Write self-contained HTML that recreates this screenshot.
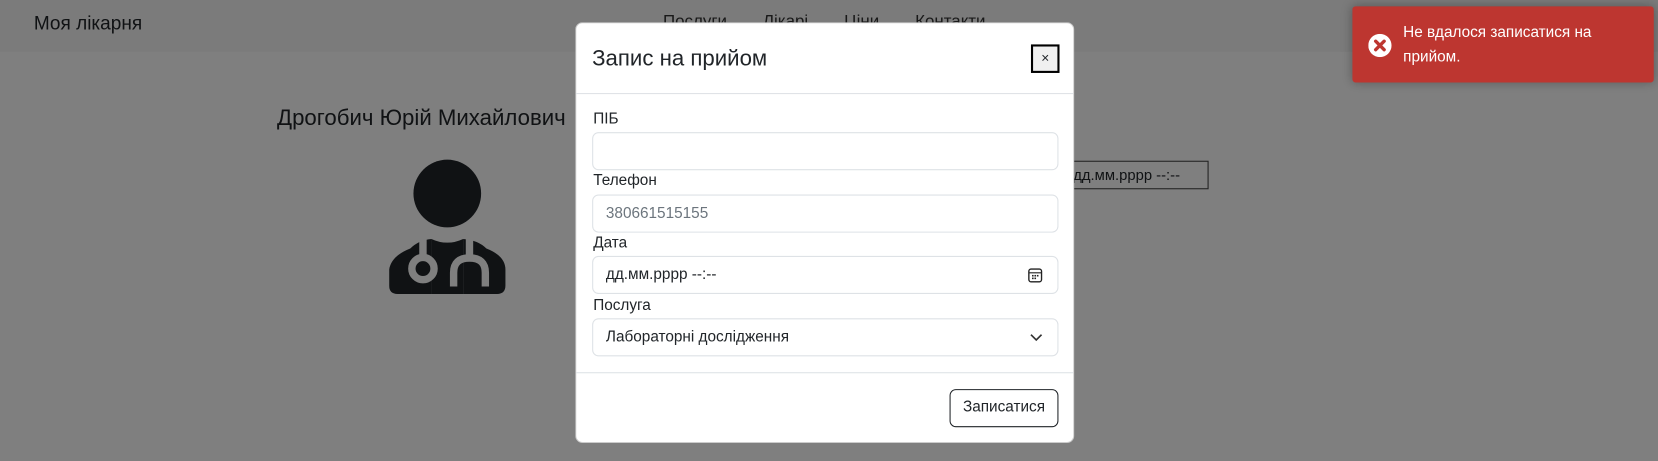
<!DOCTYPE html>
<html><head><meta charset="utf-8"><style>
*{box-sizing:border-box;margin:0;padding:0}
html,body{width:1658px;height:461px;overflow:hidden}
body{background:#fff;font-family:"Segoe UI","Liberation Sans","Noto Sans CJK SC",sans-serif;color:#212529;position:relative}
#w{position:absolute;left:0;top:0;width:1568px;height:436px;transform:scale(1.0574);transform-origin:0 0}
.nav{position:absolute;left:0;top:0;width:1568px;height:49px;background:#f6f6f6}
.brand{position:absolute;left:32px;top:12px;font-size:18px}
.links{position:absolute;top:12px;left:627px;font-size:16px;color:#333}
.links span{margin-right:34px}
.name{position:absolute;left:262px;top:100px;font-size:21px}
.bgdate{position:absolute;left:1000px;top:152px;width:143px;height:27px;border:1px solid #444;font-size:14px;padding:4px 0 0 14px}
.ov{position:absolute;left:0;top:0;width:1568px;height:436px;background:rgba(0,0,0,.5)}
.modal{position:absolute;left:544px;top:21px;width:472px;height:398px;background:#fff;border-radius:7px;border:1px solid rgba(0,0,0,.2)}
.hd{height:67px;border-bottom:1px solid #dee2e6;position:relative}
.hd h5{position:absolute;left:15px;top:22px;font-size:21px;font-weight:500}
.x{position:absolute;left:430px;top:20px;width:27px;height:27px;border:2px solid #000;font-size:13px;text-align:center;line-height:22px;background:#f0f0f0}
label{position:absolute;left:16px;font-size:14.5px}
.in{position:absolute;left:15px;width:441px;height:36px;border:1px solid #dee2e6;border-radius:6px;font-size:14.5px;padding:0 12px;line-height:34px}
.ft{position:absolute;left:0;top:330px;width:470px;border-top:1px solid #dee2e6}
.btn{position:absolute;left:353px;top:346px;width:103px;height:36px;border:1px solid #212529;border-radius:6px;font-size:14.5px;text-align:center;line-height:33px}
.toast{position:absolute;left:1279px;top:6px;width:285px;height:72px;background:#bd3630;border-radius:3px;color:#fff;font-size:14.5px;box-shadow:0 0 10px rgba(0,0,0,.3)}
.toast .t{position:absolute;left:48px;top:14px;line-height:23px}
</style></head><body><div id="w">
<div class="nav"><div class="brand">Моя лікарня</div><div class="links"><span>Послуги</span><span>Лікарі</span><span>Ціни</span><span>Контакти</span></div></div>
<div class="name">Дрогобич Юрій Михайлович</div>
<svg style="position:absolute;left:368px;top:150px" width="112" height="128" viewBox="0 0 112 128">
<circle cx="55" cy="33" r="32" fill="#212529"/>
<path d="M20 85 Q28 77 40 76 L40 128 L8 128 Q0 128 0 120 L0 105 Q2 92 20 85Z" fill="#212529"/>
<path d="M40 76 Q55 83 70 76 L70 128 L40 128Z" fill="#212529"/>
<path d="M70 76 Q84 77 92 85 Q110 92 110 105 L110 120 Q110 128 102 128 L70 128Z" fill="#212529"/>
<g fill="none" stroke="#fff" stroke-width="7">
<line x1="32" y1="74" x2="32" y2="93"/><circle cx="32" cy="104" r="10.5"/>
<path d="M76 74 L76 92 M61 121 L61 108 Q61 94 76 94 Q91 94 91 108 L91 121"/>
</g></svg>
<div class="bgdate">дд.мм.рррр --:--</div>
<div class="ov"></div>
<div class="modal">
<div class="hd"><h5>Запис на прийом</h5><div class="x">×</div></div>
<label style="top:83px">ПІБ</label><div class="in" style="top:103px"></div>
<label style="top:141px">Телефон</label><div class="in" style="top:162px;color:#6c757d">380661515155</div>
<label style="top:200px">Дата</label><div class="in" style="top:220px">дд.мм.рррр --:--<svg style="position:absolute;right:14px;top:10px" width="14" height="15" viewBox="0 0 14 15"><rect x="1" y="1.5" width="12" height="12" rx="2" fill="none" stroke="#222" stroke-width="1.3"/><line x1="1" y1="5" x2="13" y2="5" stroke="#222"/><g fill="#222"><rect x="4" y="7" width="1.5" height="1.5"/><rect x="6.3" y="7" width="1.5" height="1.5"/><rect x="8.6" y="7" width="1.5" height="1.5"/><rect x="4" y="9.5" width="1.5" height="1.5"/><rect x="6.3" y="9.5" width="1.5" height="1.5"/></g></svg></div>
<label style="top:259px">Послуга</label><div class="in" style="top:279px">Лабораторні дослідження<svg style="position:absolute;right:14px;top:13px" width="12" height="8" viewBox="0 0 12 8"><path d="M1 1.5 L6 6.5 L11 1.5" fill="none" stroke="#333" stroke-width="1.6"/></svg></div>
<div class="ft"></div>
<div class="btn">Записатися</div>
</div>
<div class="toast"><svg style="position:absolute;left:15px;top:26px" width="22" height="22" viewBox="0 0 22 22"><circle cx="11" cy="11" r="11" fill="#fff"/><path d="M7 7 L15 15 M15 7 L7 15" stroke="#bd3630" stroke-width="3.2" stroke-linecap="round"/></svg><div class="t">Не вдалося записатися на<br>прийом.</div></div>
</div></body></html>
